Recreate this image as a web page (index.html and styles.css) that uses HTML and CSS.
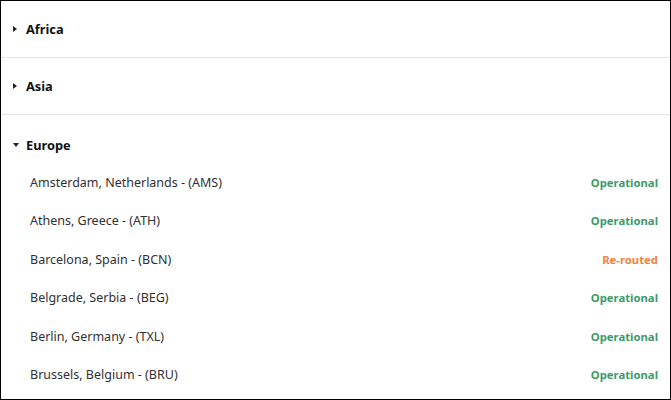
FILE: index.html
```html
<!DOCTYPE html>
<html lang="en">
<head>
    <meta charset="UTF-8">
    <meta name="viewport" content="width=device-width, initial-scale=1.0">
    <title>Service status</title>
    <link rel="stylesheet" href="styles.css">
</head>
<body>
    <div class="panel">
        <!-- collapsed regions -->
        <div class="group">
            <div class="group-header">
                <span class="caret caret-right"></span>
                <span class="group-title">Africa</span>
            </div>
        </div>
        <div class="group">
            <div class="group-header">
                <span class="caret caret-right"></span>
                <span class="group-title">Asia</span>
            </div>
        </div>

        <!-- expanded region -->
        <div class="group open">
            <div class="group-header">
                <span class="caret caret-down"></span>
                <span class="group-title">Europe</span>
            </div>
            <ul class="sites">
                <li><span>Amsterdam, Netherlands - (AMS)</span><span class="status ok">Operational</span></li>
                <li><span>Athens, Greece - (ATH)</span><span class="status ok">Operational</span></li>
                <li><span>Barcelona, Spain - (BCN)</span><span class="status warn">Re-routed</span></li>
                <li><span>Belgrade, Serbia - (BEG)</span><span class="status ok">Operational</span></li>
                <li><span>Berlin, Germany - (TXL)</span><span class="status ok">Operational</span></li>
                <li><span>Brussels, Belgium - (BRU)</span><span class="status ok">Operational</span></li>
            </ul>
        </div>
    </div>
</body>
</html>
```

FILE: styles.css
```css
body {
    margin: 0;
    padding: 0;
    background-color: #fff;
    font-family: "Noto Sans", "Open Sans", sans-serif;
    font-size: 12.5px;
    color: #323130;
}

.panel {
    box-sizing: border-box;
    width: 671px;
    height: 400px;
    border: 1px solid #000;
    overflow: hidden;
}

.group {
    border-bottom: 1px solid #e5e5e5;
}

.group.open {
    border-bottom: none;
}

.group-header {
    display: flex;
    align-items: center;
    padding: 18px 12px 18px 12px;
    line-height: 20px;
}

.group.open .group-header {
    padding-top: 20px;
    padding-bottom: 9px;
}

.caret {
    width: 8px;
    height: 8px;
    margin-right: 5px;
    display: flex;
    align-items: center;
    justify-content: flex-start;
}

.caret::before {
    content: "";
    width: 0;
    height: 0;
}

.caret-right::before {
    border-top: 3.5px solid transparent;
    border-bottom: 3.5px solid transparent;
    border-left: 4px solid #222;
}

.caret-down::before {
    border-left: 3.5px solid transparent;
    border-right: 3.5px solid transparent;
    border-top: 4px solid #222;
}

.group-title {
    font-size: 12.8px;
    font-weight: bold;
    color: #111;
}

.sites {
    list-style: none;
    margin: 0;
    padding: 0;
}

.sites li {
    display: flex;
    justify-content: space-between;
    align-items: center;
    line-height: 20px;
    padding: 9px 12px 9.4px 29px;
}

.status {
    font-size: 11.3px;
    font-weight: bold;
}

.ok {
    color: #3d9a6b;
}

.warn {
    color: #f0833f;
}
```
